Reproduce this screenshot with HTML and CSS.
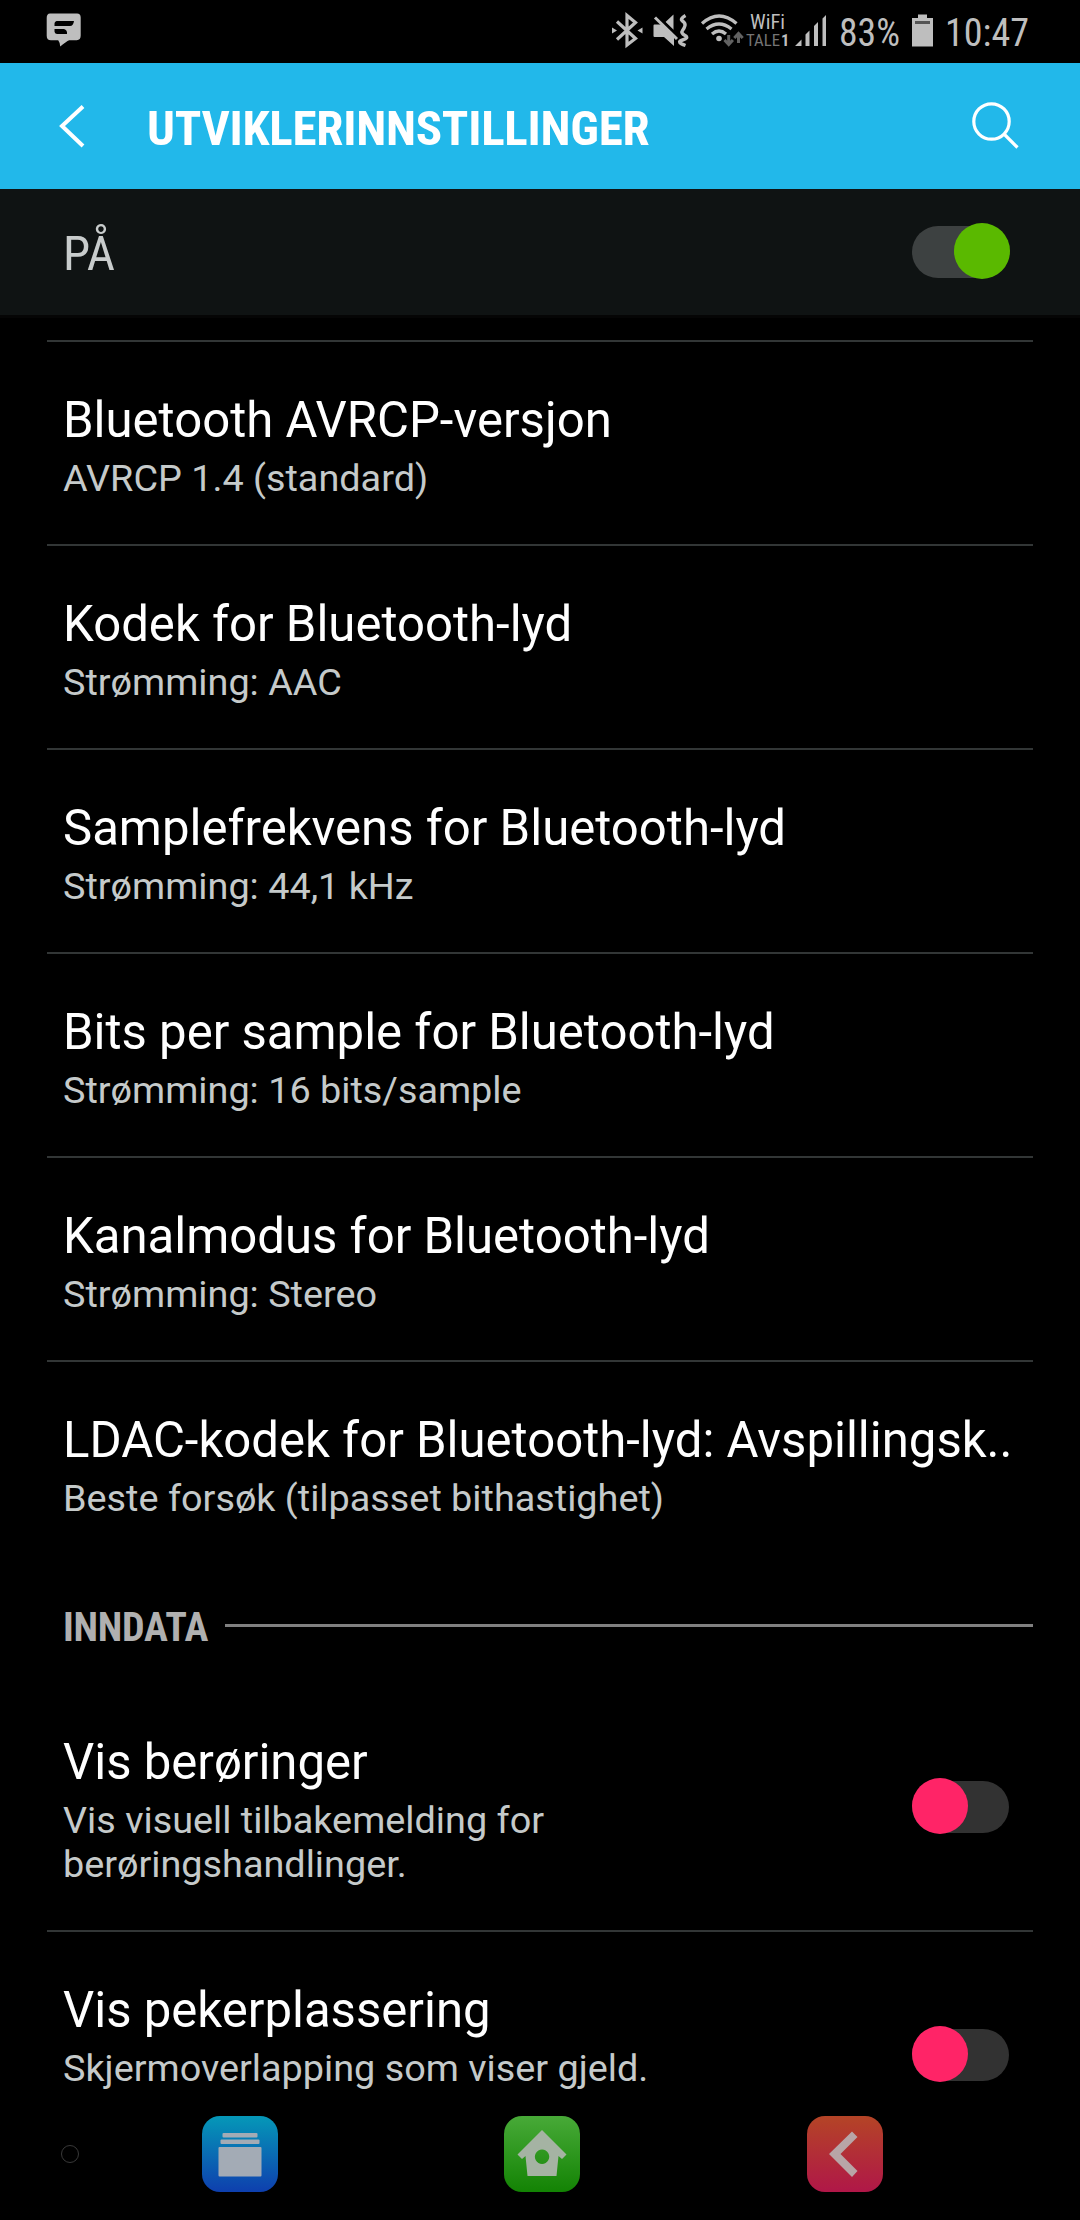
FILE: index.html
```html
<!DOCTYPE html>
<html lang="nb">
<head>
<meta charset="utf-8">
<title>Utviklerinnstillinger</title>
<link rel="stylesheet" href="styles.css">
</head>
<body>
<div class="screen">
  <div class="statusbar">
    <svg class="notice" width="36" height="36" viewBox="0 0 36 36"><path fill="#bebebe" d="M4 0.5h27q3.700 0 3.700 4v18q0 4.500-4 4.700h-7.500q-3 1.200-9 6.200q0-3.500-2-6.200H5q-4.300 0-4.300-4.500V5q0-4.500 3.300-4.500Z"/><path d="M10.500 8H28q-.7 5-4 5H8.500v-2.500q0-2 2-2.500ZM8.500 16H18q3.500 1 3 5H11q-2.500-.5-2.500-2.500Z"/></svg>
    <svg class="indicators" width="480" height="63" viewBox="600 0 480 63" fill="#bebebe">
      <g fill="none" stroke="#bebebe" stroke-width="3.200"><path d="M617 21.500L635.500 38.500L627 45V15.500L635.500 22.500L617 39.500"/></g>
      <path d="M612 27.500l5 3-5 3zM642.500 27.500l-5 3 5 3z"/>
      <path d="M654.500 24.500H662L674 36V46l-10-9h-9.500q-1 0-1-1V25.500q0-1 1-1zM665.500 22l8-7.500v15.500z"/>
      <path d="M657.500 16.500L679 37" stroke="#000" stroke-width="3"/>
      <path d="M655 17.500L677 39" stroke="#bebebe" stroke-width="3"/>
      <path d="M685.500 15.500q-6 3.500-3 5.500t2.500 4.500t-2.500 5t2.500 5t-2.500 4.500t3 5.500" fill="none" stroke="#bebebe" stroke-width="3.400"/>
      <g fill="none" stroke="#bebebe" stroke-width="3.300"><path d="M702 23.500q17-15 34.500 0M706.500 29q12.500-10 25 0M712 34q7-6 14 0"/></g><circle cx="719" cy="38.500" r="2.800"/>
      <g fill="none" stroke="#626262" stroke-width="3"><path d="M728.700 35v9.500M724.500 40l4.200 4.500l4.200-4.500M738.500 43v-9.500M734.300 38l4.200-4.500l4.200 4.500"/></g>
      <text x="750" y="29" font-size="20" textLength="35" lengthAdjust="spacingAndGlyphs">WiFi</text>
      <text x="746" y="46" font-size="16.500" textLength="34" lengthAdjust="spacingAndGlyphs" fill="#747474">TALE</text>
      <text x="781" y="46" font-size="16.500" font-weight="bold">1</text>
      <path d="M795 46h6.500v-6.500zM805.500 46V34.500l4-4V46zM814 46V26l4-4v24zM822.500 46V18.500l3.500-3.500V46z"/>
      <text x="839" y="46" font-size="39.500" textLength="61" lengthAdjust="spacingAndGlyphs">83%</text>
      <path d="M918 14.500h9V18h6v28.500h-21V18h6z"/><path d="M915 21h15v3h-15z" fill="#555"/>
      <text x="945" y="46" font-size="39.500" textLength="84" lengthAdjust="spacingAndGlyphs">10:47</text>
    </svg>
  </div>
  <header class="appbar">
    <svg width="26" height="44" viewBox="0 0 26 44" fill="none" stroke="#fff" stroke-width="4"><path d="M24 2.500L3 22L24 42"/></svg>
    <h1 class="heading">UTVIKLERINNSTILLINGER</h1>
    <svg width="50" height="50" viewBox="0 0 50 50" fill="none" stroke="#fff" stroke-width="3.200"><circle cx="20.500" cy="20.500" r="17.700"/><path d="M33 33L46.500 46.500"/></svg>
  </header>
  <div class="master"><span class="state">PÅ</span><span class="switch on"></span></div>
  <main class="list">
    <section class="row"><h2>Bluetooth AVRCP-versjon</h2><p>AVRCP 1.4 (standard)</p></section>
    <section class="row"><h2>Kodek for Bluetooth-lyd</h2><p>Strømming: AAC</p></section>
    <section class="row"><h2>Samplefrekvens for Bluetooth-lyd</h2><p>Strømming: 44,1 kHz</p></section>
    <section class="row"><h2>Bits per sample for Bluetooth-lyd</h2><p>Strømming: 16 bits/sample</p></section>
    <section class="row"><h2>Kanalmodus for Bluetooth-lyd</h2><p>Strømming: Stereo</p></section>
    <section class="row"><h2>LDAC-kodek for Bluetooth-lyd: Avspillingsk..</h2><p>Beste forsøk (tilpasset bithastighet)</p></section>
    <div class="category"><span class="category-name">INNDATA</span><span class="rule"></span></div>
    <section class="row toggle first"><div><h2>Vis berøringer</h2><p>Vis visuell tilbakemelding for<br>berøringshandlinger.</p></div><span class="switch"></span></section>
    <section class="row toggle"><div><h2>Vis pekerplassering</h2><p>Skjermoverlapping som viser gjeld.</p></div><span class="switch"></span></section>
  </main>
  <nav class="navbar">
    <span class="ring"></span>
    <span class="key recents"><svg width="76" height="76" viewBox="0 0 76 76" fill="#a3abb5"><rect x="20.500" y="17" width="35" height="4.500" rx="1"/><rect x="18.500" y="23.500" width="39" height="4.500" rx="1"/><rect x="16.500" y="31" width="43" height="29.500" rx="1"/></svg></span>
    <span class="key home"><svg width="76" height="76" viewBox="0 0 76 76" fill="#a5b3a3"><path fill-rule="evenodd" d="M38 14L62.500 38.500L58 43L54.500 40L52.500 60H23.500L21.500 40L18 43L13.500 38.500ZM38 33.500a7.200 7.200 0 1 0 .1 0Z"/></svg></span>
    <span class="key back"><svg width="76" height="76" viewBox="0 0 76 76" fill="#b8a5a7"><path d="M45 15.500L50.500 21L33.500 38L50.500 55L45 61L22 38Z"/></svg></span>
  </nav>
</div>
</body>
</html>
```
FILE: styles.css
```css
* { box-sizing: border-box; }
body, h1, h2, p { margin: 0; font-weight: 400; }
body { background: #000; font-family: Roboto, "Noto Sans", sans-serif; }
svg { display: block; }
.screen { width: 1080px; height: 2220px; overflow: hidden; display: flex; flex-direction: column; background: #000; }
.statusbar { height: 63px; flex: none; display: flex; justify-content: space-between; padding-left: 46px; }
.notice { margin-top: 13px; }
.indicators { font-family: "Roboto Condensed", Roboto, sans-serif; font-stretch: 75%; }
.appbar { height: 126px; flex: none; display: flex; align-items: center; padding: 0 59px; background: #22b8ea; }
.heading { margin: 5px auto 0 62px; font: 700 49px/60px "Roboto Condensed", Roboto, sans-serif; font-stretch: 75%; letter-spacing: -0.25px; color: #fff; white-space: nowrap; }
.master { height: 129px; flex: none; display: flex; align-items: center; justify-content: space-between; padding: 0 70px 2px 63px; background: #0f1313; border-bottom: 3px solid #050505; }
.state { padding-top: 6px; font: 400 49px/60px "Roboto Condensed", Roboto, sans-serif; font-stretch: 75%; color: #c8cccc; }

.switch { width: 98px; height: 56px; flex: none; display: grid; align-items: center; }
.switch::before, .switch::after { content: ""; grid-area: 1 / 1; }
.switch::before { width: 97px; height: 52px; margin-top: 2px; border-radius: 26px; background: #323232; }
.switch::after { width: 56px; height: 56px; border-radius: 50%; background: #ff2467; }
.switch.on::before { background: #3d4141; }
.switch.on::after { justify-self: end; background: #5ab900; }

.list { flex: 1; min-height: 0; padding: 22px 47px 0; }
.row { height: 204px; padding: 46px 16px 0; border-top: 2px solid #323636; white-space: nowrap; }
.row h2 { padding-top: 1px; font-size: 49.1px; line-height: 62px; color: #fff; }
.row p { padding-top: 5px; font-size: 37.8px; line-height: 44px; color: #c5caca; }
.category { height: 118px; display: flex; align-items: center; padding: 5px 0 0 16px; gap: 17px; }
.category-name { padding-top: 4px; font: 700 40px/48px "Roboto Condensed", Roboto, sans-serif; font-stretch: 75%; letter-spacing: -0.25px; color: #b0b0b0; }
.rule { flex: 1; height: 3px; background: #808080; }
.toggle { display: flex; justify-content: space-between; padding-right: 23px; height: 248px; }
.toggle .switch { margin-top: 48px; }
.first { border-top-color: transparent; }
.navbar { height: 132px; flex: none; display: flex; align-items: flex-start; padding: 28px 0 0 61px; }
.ring { width: 18px; height: 18px; margin: 29px 0 0; border: 1px solid #393939; border-radius: 50%; }
.key { width: 76px; height: 76px; border-radius: 18px; }
.recents { margin-left: 123px; background: linear-gradient(#0598b8, #0e3fae); }
.home { margin-left: 226px; background: linear-gradient(#48aa38, #138304); }
.back { margin-left: 227px; background: linear-gradient(#b44426, #b01748); }
```
